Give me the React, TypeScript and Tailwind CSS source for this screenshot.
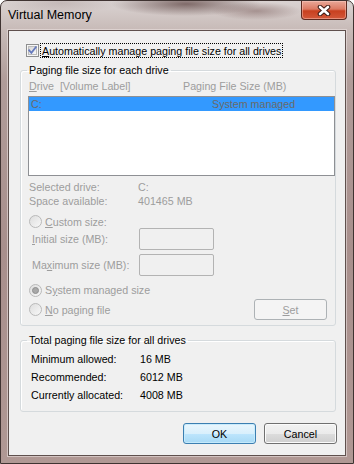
import React from "react";

const GRAY = "text-[#9d9d9d]";

function CheckBox() {
  return (
    <svg width="13" height="13" viewBox="0 0 13 13" className="shrink-0">
      <defs>
        <linearGradient id="cbg" x1="0" y1="0" x2="1" y2="1">
          <stop offset="0" stopColor="#d4d4d4" />
          <stop offset="1" stopColor="#fbfbfb" />
        </linearGradient>
      </defs>
      <rect x="0.5" y="0.5" width="12" height="12" fill="#f6f6f6" stroke="#8e8f8f" />
      <rect x="2.5" y="2.5" width="8" height="8" fill="url(#cbg)" stroke="#bcbcbc" />
      <path d="M3.2 6.3 L5.4 8.8 L9.8 3.2" fill="none" stroke="#6579bd" strokeWidth="1.8" strokeLinecap="square" />
    </svg>
  );
}

function Radio({ checked, id }: { checked?: boolean; id: string }) {
  return (
    <svg width="13" height="13" viewBox="0 0 13 13" className="shrink-0">
      <defs>
        <linearGradient id={id} x1="0" y1="0" x2="1" y2="1">
          <stop offset="0" stopColor="#dcdcdc" />
          <stop offset="1" stopColor="#f9f9f9" />
        </linearGradient>
      </defs>
      <circle cx="6.5" cy="6.5" r="6" fill={`url(#${id})`} stroke="#b9b9b9" />
      {checked && <circle cx="6.5" cy="6.5" r="3" fill="#a8a8a8" stroke="#8f8f8f" />}
    </svg>
  );
}

function CloseGlyph() {
  return (
    <svg width="14" height="11" viewBox="0 0 14 11">
      <path d="M3 2 L11 9 M11 2 L3 9" stroke="#3b1a14" strokeWidth="4.6" strokeLinecap="round" />
      <path d="M3 2 L11 9 M11 2 L3 9" stroke="#ffffff" strokeWidth="2.6" strokeLinecap="round" />
    </svg>
  );
}

export default function App() {
  return (
    <div className="w-[354px] h-[464px] font-['Liberation_Sans',Arial,sans-serif] text-[10.7px] leading-[14px] text-black">
      <div className="w-[354px] h-[464px] border border-[#3f3331] rounded-t-[7px] flex flex-col px-[7px] pb-[7px] bg-[image:radial-gradient(ellipse_75px_12px_at_185px_3px,rgba(80,52,50,0.65),transparent),radial-gradient(ellipse_45px_9px_at_255px_10px,rgba(120,90,88,0.5),transparent),radial-gradient(ellipse_60px_10px_at_60px_2px,rgba(150,130,128,0.3),transparent),linear-gradient(to_bottom,#dad3d2,#c8bbb8_28px,#b09c99_80px,#a88f8c_250px,#b09894)]">
        <div className="h-[29px] flex justify-between -mx-[7px]">
          <div className="pl-[7px] pt-[6px] text-[12.5px] leading-[16px] text-black">Virtual Memory</div>
          <div className="mr-[6px] w-[46px] h-[19px] rounded-b-[4px] border border-t-0 border-[#5e2a20] flex items-center justify-center bg-[linear-gradient(to_bottom,#e9a898,#dc7a63_45%,#c8401f_55%,#d3583a)] shadow-[inset_0_0_0_1px_rgba(255,210,200,0.45)]">
            <CloseGlyph />
          </div>
        </div>
        <div className="flex-1 border border-[#5f504d] bg-[#f0f0f0] shadow-[0_0_0_1px_rgba(235,225,223,0.6)] flex flex-col pl-[11px]">
          <div className="mt-[12px] h-[15px] flex items-center pl-[6px]">
            <CheckBox />
            <div className="ml-[1px] h-[15px] border border-dotted border-black px-[1px] flex items-center">
              <span><u>A</u>utomatically manage paging file size for all drives</span>
            </div>
          </div>

          <fieldset className="mt-[5px] w-[316px] border border-[#d5dadd] rounded-[3px] shadow-[inset_1px_1px_0_#ffffff] pb-[5px] flex flex-col">
            <legend className="ml-[6px] px-[2px] leading-[14px]">Paging file size for each drive</legend>
            <div className={`mt-[2px] h-[14px] flex ml-[8px] ${GRAY}`}>
              <span className="w-[154px]"><u>D</u>rive&nbsp; [Volume Label]</span>
              <span>Paging File Size (MB)</span>
            </div>
            <div className="mt-[3px] ml-[7px] w-[307px] h-[80px] border border-[#8e9094] bg-white">
              <div className="h-[14px] bg-[#3399ff] flex items-center pl-[2px] text-[#6a6a6a]">
                <span className="w-[181px]">C:</span>
                <span>System managed</span>
              </div>
            </div>
            <div className={`mt-[4px] ml-[8px] h-[14px] flex ${GRAY}`}>
              <span className="w-[109px]">Selected drive:</span>
              <span>C:</span>
            </div>
            <div className={`ml-[8px] h-[14px] flex ${GRAY}`}>
              <span className="w-[109px]">Space available:</span>
              <span>401465 MB</span>
            </div>
            <div className={`mt-[7px] ml-[8px] h-[13px] flex items-center gap-[3px] ${GRAY}`}>
              <Radio id="r1" />
              <span><u>C</u>ustom size:</span>
            </div>
            <div className={`ml-[11px] h-[22px] flex items-center ${GRAY}`}>
              <span className="w-[107px]"><u>I</u>nitial size (MB):</span>
              <div className="w-[75px] h-[22px] border border-[#b3b3b3] rounded-[2px] bg-[#f0f0f0]" />
            </div>
            <div className={`mt-[4px] ml-[11px] h-[22px] flex items-center ${GRAY}`}>
              <span className="w-[107px]">Ma<u>x</u>imum size (MB):</span>
              <div className="w-[75px] h-[22px] border border-[#b3b3b3] rounded-[2px] bg-[#f0f0f0]" />
            </div>
            <div className={`mt-[7px] ml-[8px] h-[14px] flex items-center gap-[3px] ${GRAY}`}>
              <Radio id="r2" checked />
              <span>S<u>y</u>stem managed size</span>
            </div>
            <div className={`mt-[2px] ml-[8px] mr-[8px] h-[21px] flex items-center ${GRAY}`}>
              <Radio id="r3" />
              <span className="ml-[3px]"><u>N</u>o paging file</span>
              <div className="ml-auto w-[73px] h-[21px] rounded-[3px] border border-[#adb2b5] bg-[#f4f4f4] flex items-center justify-center">
                <span><u>S</u>et</span>
              </div>
            </div>
          </fieldset>

          <fieldset className="mt-[7px] w-[316px] border border-[#d5dadd] rounded-[3px] shadow-[inset_1px_1px_0_#ffffff] pb-[9px] flex flex-col">
            <legend className="ml-[6px] px-[2px] leading-[14px]">Total paging file size for all drives</legend>
            <div className="mt-[5px] ml-[10px] h-[14px] flex">
              <span className="w-[109px]">Minimum allowed:</span>
              <span>16 MB</span>
            </div>
            <div className="mt-[4px] ml-[10px] h-[14px] flex">
              <span className="w-[109px]">Recommended:</span>
              <span>6012 MB</span>
            </div>
            <div className="mt-[4px] ml-[10px] h-[14px] flex">
              <span className="w-[109px]">Currently allocated:</span>
              <span>4008 MB</span>
            </div>
          </fieldset>

          <div className="mt-[11px] w-[317px] flex justify-end gap-[8px]">
            <div className="w-[73px] h-[21px] rounded-[3px] border border-[#3c7fb1] bg-[linear-gradient(to_bottom,#eaf6fd,#d9f0fc_50%,#bee6fd_50%,#a7d9f5)] shadow-[inset_0_0_0_1px_rgba(200,235,252,0.9)] flex items-center justify-center">
              OK
            </div>
            <div className="w-[73px] h-[21px] rounded-[3px] border border-[#707070] bg-[linear-gradient(to_bottom,#f2f2f2,#ebebeb_50%,#dddddd_50%,#cfcfcf)] shadow-[inset_0_0_0_1px_#fbfbfb] flex items-center justify-center">
              Cancel
            </div>
          </div>
        </div>
      </div>
    </div>
  );
}
